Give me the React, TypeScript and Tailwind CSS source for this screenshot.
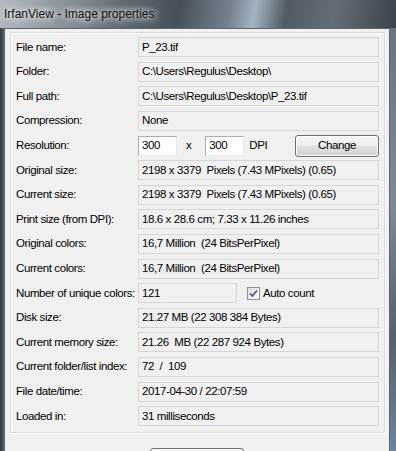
import React from "react"

const rows: [string, string][] = [
  ["File name:", "P_23.tif"],
  ["Folder:", "C:\\Users\\Regulus\\Desktop\\"],
  ["Full path:", "C:\\Users\\Regulus\\Desktop\\P_23.tif"],
  ["Compression:", "None"],
  ["Resolution:", ""],
  ["Original size:", "2198 x 3379  Pixels (7.43 MPixels) (0.65)"],
  ["Current size:", "2198 x 3379  Pixels (7.43 MPixels) (0.65)"],
  ["Print size (from DPI):", "18.6 x 28.6 cm; 7.33 x 11.26 inches"],
  ["Original colors:", "16,7 Million  (24 BitsPerPixel)"],
  ["Current colors:", "16,7 Million  (24 BitsPerPixel)"],
  ["Number of unique colors:", ""],
  ["Disk size:", "21.27 MB (22 308 384 Bytes)"],
  ["Current memory size:", "21.26  MB (22 287 924 Bytes)"],
  ["Current folder/list index:", "72  /  109"],
  ["File date/time:", "2017-04-30 / 22:07:59"],
  ["Loaded in:", "31 milliseconds"],
]

function ReadOnly({ value, width = "w-[241px]" }: { value: string; width?: string }) {
  return (
    <div className={`${width} h-[20px] flex items-center border border-[#d6d6d6] bg-[#f0f0f0] pl-[3px] whitespace-pre`}>
      {value}
    </div>
  )
}

function Input({ value }: { value: string }) {
  return (
    <div className="w-[39px] h-[20px] flex items-center border border-[#abadb3] border-r-[#e3e9ef] border-b-[#e3e9ef] bg-white pl-[3px]">
      {value}
    </div>
  )
}

function Button({ label, className = "" }: { label: string; className?: string }) {
  return (
    <div
      className={`h-[22px] flex items-center justify-center rounded-[3px] border border-[#707070] bg-[linear-gradient(#f4f4f4_0%,#ededed_50%,#e0e0e0_51%,#d4d4d4_100%)] shadow-[inset_0_0_0_1px_#fcfcfc] ${className}`}
    >
      {label}
    </div>
  )
}

function Field({ label, value }: { label: string; value: string }) {
  let content: React.ReactNode = <ReadOnly value={value} />
  if (label === "Resolution:") {
    content = (
      <div className="w-[241px] flex items-center">
        <Input value="300" />
        <span className="ml-[9px]">x</span>
        <div className="ml-[14px]">
          <Input value="300" />
        </div>
        <span className="ml-[5px]">DPI</span>
        <Button label="Change" className="ml-auto w-[84px]" />
      </div>
    )
  }
  if (label === "Number of unique colors:") {
    content = (
      <div className="flex items-center">
        <ReadOnly value="121" width="w-[99px]" />
        <div className="ml-[10px] w-[13px] h-[13px] border border-[#8e8f8f] bg-[linear-gradient(135deg,#dcdcdc,#ffffff)] flex items-center justify-center">
          <svg width="11" height="11" viewBox="0 0 11 11">
            <path d="M2 5.5 L4.3 8 L9 2.5" fill="none" stroke="#4a5f8a" strokeWidth="1.8" />
          </svg>
        </div>
        <span className="ml-[3px]">Auto count</span>
      </div>
    )
  }
  return (
    <div className="h-[24.6px] flex items-center">
      <div className="w-[122px] shrink-0">{label}</div>
      {content}
    </div>
  )
}

export default function App() {
  return (
    <div
      className="w-[396px] h-[451px] overflow-hidden flex flex-col bg-[#48525a] text-black text-[11.5px] tracking-[-0.4px]"
      style={{ fontFamily: '"Liberation Sans", Arial, sans-serif' }}
    >
      {/* Title bar */}
      <div className="h-[28px] shrink-0 flex items-center pl-[4px] bg-[linear-gradient(100deg,#b4babf_0%,#9199a0_14%,#646d75_30%,#465058_45%,#76838f_58%,#a3b3c0_64%,#505b64_72%,#646e76_84%,#3b434a_100%)]">
        <span className="text-[12px] tracking-normal text-[#111] [text-shadow:0_0_6px_#ffffff,0_0_10px_#ffffff]">
          IrfanView - Image properties
        </span>
      </div>

      <div className="flex flex-1">
        {/* Left frame */}
        <div className="w-[4px] bg-[linear-gradient(90deg,#2f363c,#5a646c)]" />

        {/* Client area */}
        <div className="w-[386px] bg-[#f0f0f0] border border-b-0 border-[#5b6670] flex flex-col">
          <div className="ml-[5px] mr-[4px] mt-[3px] h-[401px] border border-[#d5d9dc] rounded-[2px] shadow-[inset_1px_1px_0_#ffffff,1px_1px_0_#ffffff] pt-[2px] pl-[5px]">
            {rows.map(([label, value]) => (
              <Field key={label} label={label} value={value} />
            ))}
          </div>
          <Button label="" className="ml-[145px] mt-[15px] w-[94px]" />
        </div>

        {/* Right frame */}
        <div className="w-[6px] bg-[linear-gradient(180deg,#6a747c,#7c8a96_40%,#55616c_70%,#6f8ba8_100%)]" />
      </div>
    </div>
  )
}
